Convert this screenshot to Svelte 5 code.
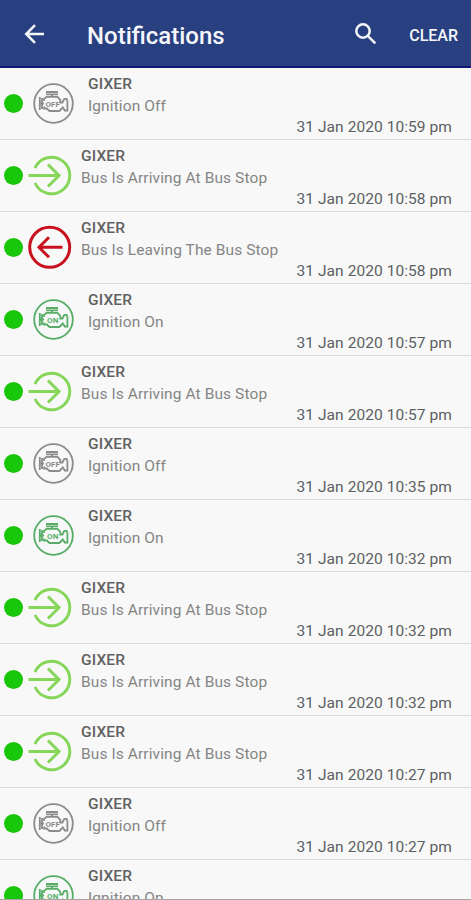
<script lang="ts">
  type Kind = 'off' | 'on' | 'arriving' | 'leaving'

  interface Notification {
    kind: Kind
    time?: string
  }

  const messages: Record<Kind, string> = {
    off: 'Ignition Off',
    on: 'Ignition On',
    arriving: 'Bus Is Arriving At Bus Stop',
    leaving: 'Bus Is Leaving The Bus Stop'
  }

  const notifications: Notification[] = [
    { kind: 'off', time: '10:59 pm' },
    { kind: 'arriving', time: '10:58 pm' },
    { kind: 'leaving', time: '10:58 pm' },
    { kind: 'on', time: '10:57 pm' },
    { kind: 'arriving', time: '10:57 pm' },
    { kind: 'off', time: '10:35 pm' },
    { kind: 'on', time: '10:32 pm' },
    { kind: 'arriving', time: '10:32 pm' },
    { kind: 'arriving', time: '10:32 pm' },
    { kind: 'arriving', time: '10:27 pm' },
    { kind: 'off', time: '10:27 pm' },
    { kind: 'on' }
  ]
</script>

<div class="screen">
  <header class="toolbar">
    <button class="back" aria-label="Back">
      <svg width="22" height="20" viewBox="0 0 22 20">
        <path d="M20 10H2.5M11 1.2L2.2 10L11 18.8" />
      </svg>
    </button>
    <h1>Notifications</h1>
    <button class="search" aria-label="Search">
      <svg width="24" height="24" viewBox="0 0 24 24">
        <circle cx="9" cy="9" r="6.7" />
        <path d="M13.8 13.8L21.3 21.3" />
      </svg>
    </button>
    <button class="clear">CLEAR</button>
  </header>

  <ul class="list">
    {#each notifications as item}
      <li class="row">
        <span class="dot"></span>
        <div class="icon">
          {#if item.kind === 'arriving'}
            <svg class="arriving" width="48" height="44" viewBox="0 0 48 44">
              <path d="M7 15A18.2 18.2 0 1 1 7 30" />
              <path d="M.5 22.5H31M20 11.5L31 22.5L20 33.5" />
            </svg>
          {:else if item.kind === 'leaving'}
            <svg class="leaving" width="48" height="44" viewBox="0 0 48 44">
              <circle cx="21.7" cy="22.3" r="20" />
              <path d="M34.5 22.3H10.5M21 12.3L11 22.3L21 32.3" />
            </svg>
          {:else}
            <!-- Engine inside a ring, labelled with its state -->
            <svg class="engine {item.kind}" width="48" height="44" viewBox="0 0 48 44">
              <circle cx="25.5" cy="22.5" r="19.3" />
              <path d="M18 11H30M18 13.3H30M24 13V16" />
              <path d="M11.8 16V29M14 17V28M11.8 22.5H16" />
              <path d="M16 20V18L18.5 15.8H29.5L32.3 18.8V21.5H34.5L36.3 17.8H38.6L39.4 20V29.5H36.8L34.8 26.5L31.3 30H21.5L18.8 27.5H16V25.5" />
              <text x="24.7" y="25.8">{item.kind === 'off' ? 'OFF' : 'ON'}</text>
            </svg>
          {/if}
        </div>
        <div class="body" class:indented={item.kind === 'off' || item.kind === 'on'}>
          <div class="name">GIXER</div>
          <div class="message">{messages[item.kind]}</div>
          {#if item.time}
            <div class="time">31 Jan 2020 {item.time}</div>
          {/if}
        </div>
      </li>
    {/each}
  </ul>
</div>

<style>
  :global(body) {
    margin: 0;
    overflow: hidden;
  }

  .screen {
    box-sizing: border-box;
    height: 900px;
    overflow: hidden;
    background: #f8f8f8;
    border-bottom: 1px solid #a4a4a4;
    font-family: Roboto, sans-serif;
  }

  .toolbar {
    box-sizing: border-box;
    display: flex;
    align-items: center;
    height: 68px;
    padding: 2px 13px 0 24px;
    background: #294080;
    border-bottom: 2px solid #10197a;
    color: #f5f6fa;
  }

  button {
    display: flex;
    padding: 0;
    border: 0;
    background: none;
    color: inherit;
    font: inherit;
  }

  .toolbar svg {
    fill: none;
    stroke: currentColor;
    stroke-width: 2.5;
  }

  h1 {
    flex: 1;
    margin: 4px 0 0 41px;
    font-size: 24px;
    font-weight: 500;
    line-height: 28px;
  }

  .search {
    margin-right: 31px;
  }

  .clear {
    margin-top: 3px;
    font-size: 16px;
    font-weight: 500;
    line-height: 20px;
  }

  .list {
    margin: 0;
    padding: 0;
    list-style: none;
  }

  .row {
    box-sizing: border-box;
    display: flex;
    height: 72px;
    padding: 0 19px 0 4px;
    border-bottom: 1px solid #dcdcdc;
  }

  .dot {
    width: 19px;
    height: 19px;
    margin-top: 26px;
    border-radius: 50%;
    background: #18c60a;
  }

  .icon {
    width: 48px;
    height: 44px;
    margin: 13px 0 0 5px;
  }

  .icon svg {
    display: block;
    fill: none;
  }

  .arriving {
    stroke: #86d65a;
    stroke-width: 3;
  }

  .leaving {
    stroke: #c9101f;
    stroke-width: 3;
  }

  .engine {
    stroke-width: 1.8;
  }

  .engine.off {
    color: #8c8c8c;
    stroke: currentColor;
  }

  .engine.on {
    color: #57ad67;
    stroke: currentColor;
  }

  .engine text {
    fill: currentColor;
    stroke: none;
    font-size: 8px;
    font-weight: 700;
    text-anchor: middle;
  }

  .body {
    flex: 1;
    padding: 6px 0 0 5px;
  }

  .body.indented {
    padding-left: 12px;
  }

  .name {
    color: #616161;
    font-size: 15.5px;
    font-weight: 500;
    letter-spacing: 0.15px;
    line-height: 21px;
  }

  .message {
    color: #858585;
    font-size: 15.5px;
    letter-spacing: 0.1px;
    line-height: 22px;
  }

  .time {
    color: #5c5f61;
    font-size: 15.5px;
    letter-spacing: 0.07px;
    line-height: 20px;
    text-align: right;
  }
</style>
